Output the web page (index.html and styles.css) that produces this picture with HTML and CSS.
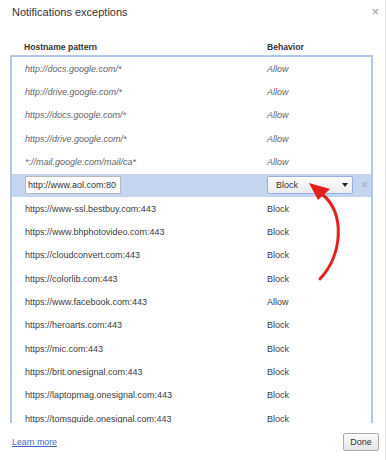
FILE: index.html
```html
<!DOCTYPE html>
<html>
  <head>
    <meta charset="UTF-8">
    <link rel="stylesheet" href="styles.css">
  </head>
  <body>
    <div id="dialog">
      <div class="dialog-title">
        <span>Notifications exceptions</span>
        <span class="dialog-close">&times;</span>
      </div>

      <div class="list-head">
        <span>Hostname pattern</span>
        <span>Behavior</span>
      </div>

      <div id="exceptions">
        <div class="row policy"><span>http://docs.google.com/*</span><span>Allow</span></div>
        <div class="row policy"><span>http://drive.google.com/*</span><span>Allow</span></div>
        <div class="row policy"><span>https://docs.google.com/*</span><span>Allow</span></div>
        <div class="row policy"><span>https://drive.google.com/*</span><span>Allow</span></div>
        <div class="row policy"><span>*://mail.google.com/mail/ca*</span><span>Allow</span></div>
        <div class="row selected">
          <span><input type="text" value="http://www.aol.com:80"></span>
          <span class="behavior-edit">
            <span class="dropdown">Block<span class="dropdown-arrow"></span></span>
            <span class="row-delete">&times;</span>
          </span>
        </div>
        <div class="row"><span>https://www-ssl.bestbuy.com:443</span><span>Block</span></div>
        <div class="row"><span>https://www.bhphotovideo.com:443</span><span>Block</span></div>
        <div class="row"><span>https://cloudconvert.com:443</span><span>Block</span></div>
        <div class="row"><span>https://colorlib.com:443</span><span>Block</span></div>
        <div class="row"><span>https://www.facebook.com:443</span><span>Allow</span></div>
        <div class="row"><span>https://heroarts.com:443</span><span>Block</span></div>
        <div class="row"><span>https://mic.com:443</span><span>Block</span></div>
        <div class="row"><span>https://brit.onesignal.com:443</span><span>Block</span></div>
        <div class="row"><span>https://laptopmag.onesignal.com:443</span><span>Block</span></div>
        <div class="row"><span>https://tomsguide.onesignal.com:443</span><span>Block</span></div>
      </div>

      <div class="dialog-footer">
        <a href="#">Learn more</a>
        <span class="button">Done</span>
      </div>
    </div>

    <svg class="annotation" width="387" height="460" viewBox="0 0 387 460">
      <path d="M320 279 C342 255 346 214 322 194" fill="none" stroke="#e3211c" stroke-width="3" stroke-linecap="round"/>
      <polygon points="309,183 330,189 318,200" fill="#e3211c"/>
    </svg>
  </body>
</html>
```

FILE: styles.css
```css
body {
  margin: 0;
  background-color: #fff;
  font-family: "Liberation Sans", Arial, sans-serif;
  color: #333;
}

#dialog {
  width: 386px;
  height: 460px;
  padding: 0 12px 0 10px;
  box-sizing: border-box;
  border-right: 1px solid #e4e4e4;
  display: flex;
  flex-direction: column;
}

.dialog-title {
  height: 24px;
  line-height: 24px;
  font-size: 11px;
  color: #333;
  display: flex;
  justify-content: space-between;
  padding-left: 2px;
}

.dialog-close {
  color: #999;
  font-size: 13px;
  margin-right: -6px;
}

.list-head {
  margin-top: 15px;
  height: 16px;
  line-height: 16px;
  font-size: 8.6px;
  font-weight: bold;
  color: #333;
  display: grid;
  grid-template-columns: 243px 1fr;
  padding-left: 14px;
}

#exceptions {
  height: 368px;
  border: 2px solid #b2c6ea;
  border-bottom: 0;
  box-sizing: border-box;
  overflow: hidden;
}

.row {
  height: 23.33px;
  display: grid;
  grid-template-columns: 242px 1fr;
  align-items: center;
  padding-left: 13px;
  font-size: 9px;
  color: #3c3c3c;
}

.row.policy {
  font-style: italic;
  color: #666;
}

.row.selected {
  background-color: #c4d5ef;
}

.row input[type=text] {
  width: 96px;
  height: 18px;
  box-sizing: border-box;
  border: 1px solid #b9b9b9;
  background-color: #fff;
  font-family: "Liberation Sans", Arial, sans-serif;
  font-size: 9px;
  color: #333;
  padding: 0 2px;
  outline: none;
  margin: 0;
}

.behavior-edit {
  display: flex;
  align-items: center;
}

.dropdown {
  width: 86px;
  height: 18px;
  box-sizing: border-box;
  border: 1px solid #93b2e2;
  border-radius: 2px;
  background: linear-gradient(#fdfdfd, #ececec);
  display: flex;
  align-items: center;
  justify-content: space-between;
  padding: 0 4px 0 8px;
  color: #333;
}

.dropdown-arrow {
  width: 0;
  height: 0;
  border-left: 3.5px solid transparent;
  border-right: 3.5px solid transparent;
  border-top: 4px solid #222;
}

.row-delete {
  margin-left: 8px;
  color: #a4a9b2;
  font-size: 12px;
}

.dialog-footer {
  flex-grow: 1;
  display: flex;
  align-items: center;
  justify-content: space-between;
  padding-left: 2px;
  margin-right: -6px;
}

.dialog-footer a {
  color: #4368c9;
  font-size: 8.8px;
  text-decoration: underline;
}

.button {
  width: 36px;
  height: 18px;
  box-sizing: border-box;
  border: 1px solid #ababab;
  border-radius: 2px;
  background: linear-gradient(#fafafa, #e6e6e6);
  font-size: 9px;
  color: #333;
  display: flex;
  align-items: center;
  justify-content: center;
}

.annotation {
  position: absolute;
  left: 0;
  top: 0;
  pointer-events: none;
}
```
